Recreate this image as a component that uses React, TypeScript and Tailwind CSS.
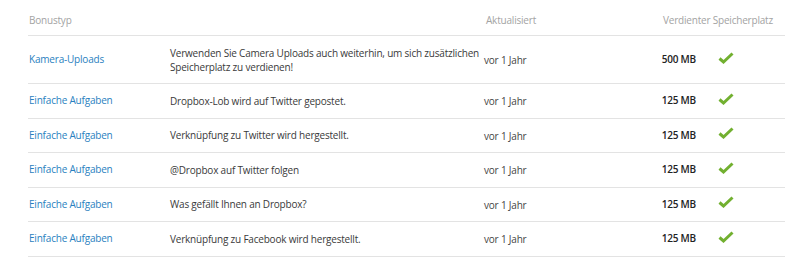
import React from "react";

const rows = [
  { type: "Kamera-Uploads", desc: "Verwenden Sie Camera Uploads auch weiterhin, um sich zusätzlichen Speicherplatz zu verdienen!", amt: "500 MB", tall: true },
  { type: "Einfache Aufgaben", desc: "Dropbox-Lob wird auf Twitter gepostet.", amt: "125 MB" },
  { type: "Einfache Aufgaben", desc: "Verknüpfung zu Twitter wird hergestellt.", amt: "125 MB" },
  { type: "Einfache Aufgaben", desc: "@Dropbox auf Twitter folgen", amt: "125 MB" },
  { type: "Einfache Aufgaben", desc: "Was gefällt Ihnen an Dropbox?", amt: "125 MB" },
  { type: "Einfache Aufgaben", desc: "Verknüpfung zu Facebook wird hergestellt.", amt: "125 MB" },
];

function Check() {
  return (
    <svg width="16" height="12" viewBox="0 0 16 12">
      <path d="M1.5 6.5 L5.5 10 L14.5 1.5" fill="none" stroke="#72b030" strokeWidth="3" strokeLinejoin="miter" />
    </svg>
  );
}

export default function App() {
  return (
    <div className="w-[800px] h-[263px] bg-white" style={{ fontFamily: '"Open Sans", sans-serif' }}>
      <div className="ml-[28px] w-[757px] text-[10px] tracking-[-0.2px]">
        <div className="flex h-[36px] pt-[12px] border-b border-[#e3e3e3] text-[#a3a3a3] leading-[16px] whitespace-nowrap">
          <div className="w-[458px] pl-[1px]">Bonustyp</div>
          <div className="w-[177px]">Aktualisiert</div>
          <div>Verdienter Speicherplatz</div>
        </div>
        {rows.map((r, i) => (
          <div key={i} className={`flex items-center border-b border-[#e3e3e3] ${r.tall ? "h-[48px]" : "h-[34.5px]"}`}>
            <div className="w-[142px] pl-[1px] text-[#2a7fc0]">{r.type}</div>
            <div className="w-[314px] text-[#3a3a3a] leading-[14px]">{r.desc}</div>
            <div className="w-[150px] text-[#444] pt-[2px]">vor 1 Jahr</div>
            <div className="w-[62px] text-right font-semibold text-[#222]">{r.amt}</div>
            <div className="pl-[22px] pb-[4px] flex"><Check /></div>
          </div>
        ))}
      </div>
    </div>
  );
}
